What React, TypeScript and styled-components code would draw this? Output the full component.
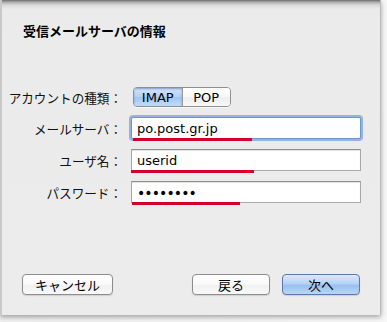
import React from 'react';
import styled, { createGlobalStyle } from 'styled-components';

const GlobalStyle = createGlobalStyle`
  html, body {
    margin: 0;
    padding: 0;
    background: #f4f4f4;
  }
  body {
    font-family: "DejaVu Sans", "Noto Sans CJK JP", sans-serif;
    font-size: 13px;
    color: #111;
  }
`;

const Page = styled.div`
  width: 387px;
  height: 322px;
  overflow: hidden;
  background: linear-gradient(90deg, #f0f0f0 0, #f7f7f7 100%);
`;

const Sheet = styled.div`
  box-sizing: border-box;
  width: 381px;
  height: 315px;
  display: flex;
  flex-direction: column;
  background: linear-gradient(180deg, #6c6c6c 0, #a9a9a9 2px, #d9d9d9 5px, #ebebeb 9px, #ececec 100%);
  border-left: 2px solid #c9c9c9;
  border-right: 1px solid #b9b9b9;
  box-shadow: 0 2px 5px rgba(0, 0, 0, 0.35);
`;

const Title = styled.h1`
  margin: 23px 0 0 21px;
  font-family: "Noto Sans CJK JP", sans-serif;
  font-size: 13px;
  line-height: 16px;
  font-weight: 700;
  color: #000;
`;

const Form = styled.div`
  display: grid;
  grid-template-columns: 120px 230px;
  column-gap: 9px;
  row-gap: 10px;
  align-items: center;
  margin-top: 48px;
`;

const Label = styled.div`
  font-family: "Noto Sans CJK JP", sans-serif;
  font-size: 12.6px;
  text-align: right;
  white-space: nowrap;
  color: #111;
`;

const Segmented = styled.div`
  display: flex;
  width: 98px;
  height: 20px;
  margin-left: 2px;
  box-sizing: border-box;
  border: 1px solid #8f8f8f;
  border-radius: 4px;
  overflow: hidden;
  box-shadow: 0 1px 0 rgba(255, 255, 255, 0.7);
`;

const Segment = styled.div<{ $active?: boolean }>`
  flex: 1;
  display: flex;
  align-items: center;
  justify-content: center;
  font-size: 13px;
  color: #000;
  background: ${({ $active }) =>
    $active
      ? 'linear-gradient(180deg, #d4e5fb 0, #b3d0f5 50%, #9fc4f1 51%, #c3dcfa 100%)'
      : 'linear-gradient(180deg, #ffffff 0, #f7f7f7 50%, #eeeeee 51%, #f8f8f8 100%)'};
  box-shadow: ${({ $active }) => ($active ? 'inset 0 1px 2px rgba(40, 70, 130, 0.45)' : 'none')};
  & + & {
    border-left: 1px solid #9a9a9a;
  }
`;

const FieldWrap = styled.div`
  position: relative;
  width: 230px;
  height: 22px;
`;

const Field = styled.div<{ $focused?: boolean }>`
  box-sizing: border-box;
  height: 22px;
  display: flex;
  align-items: center;
  padding-left: 5px;
  background: #fff;
  border: 1px solid ${({ $focused }) => ($focused ? '#6f97cf' : '#a8a8a8')};
  border-top-color: ${({ $focused }) => ($focused ? '#6f97cf' : '#8e8e8e')};
  border-radius: ${({ $focused }) => ($focused ? '2px' : '0')};
  box-shadow: ${({ $focused }) =>
    $focused ? '0 0 0 2px rgba(120, 160, 220, 0.75)' : 'inset 0 1px 1px rgba(0, 0, 0, 0.12)'};
  font-size: 13px;
  color: #000;
`;

const Dots = styled.span`
  font-family: "DejaVu Sans", sans-serif;
  font-size: 14px;
  letter-spacing: -0.9px;
  padding-top: 1px;
`;

const Underline = styled.div`
  position: absolute;
  left: 2px;
  bottom: -2px;
  height: 3px;
  background: #d6002a;
`;

const Spacer = styled.div`
  flex: 1;
`;

const ButtonRow = styled.div`
  display: flex;
  align-items: center;
  padding: 0 20px 20px 20px;
`;

const Button = styled.button<{ $primary?: boolean; $w: number }>`
  box-sizing: border-box;
  width: ${({ $w }) => $w}px;
  height: 21px;
  padding: 0;
  font-family: "Noto Sans CJK JP", sans-serif;
  font-size: 13px;
  line-height: 19px;
  color: #000;
  border-radius: 4px;
  border: 1px solid ${({ $primary }) => ($primary ? '#5d79a8' : '#8d8d8d')};
  background: ${({ $primary }) =>
    $primary
      ? 'linear-gradient(180deg, #dbe9fc 0, #b6d2f6 45%, #98c0f0 55%, #b9d6f8 100%)'
      : 'linear-gradient(180deg, #ffffff 0, #f9f9f9 50%, #f0f0f0 51%, #f9f9f9 100%)'};
  box-shadow: 0 1px 1px rgba(0, 0, 0, 0.12);
`;

const fields = [
  { label: 'メールサーバ：', value: 'po.post.gr.jp', focused: true, mark: 119, left: 2 },
  { label: 'ユーザ名：', value: 'userid', focused: false, mark: 123, left: 0 },
  { label: 'パスワード：', value: '', secret: 8, focused: false, mark: 108, left: 1 },
];

export default function App() {
  return (
    <Page>
      <GlobalStyle />
      <Sheet>
        <Title>受信メールサーバの情報</Title>
        <Form>
          <Label>アカウントの種類：</Label>
          <Segmented>
            <Segment $active>IMAP</Segment>
            <Segment>POP</Segment>
          </Segmented>
          {fields.map((f) => (
            <React.Fragment key={f.label}>
              <Label>{f.label}</Label>
              <FieldWrap>
                <Field $focused={f.focused}>
                  {f.secret ? <Dots>{'•'.repeat(f.secret)}</Dots> : f.value}
                </Field>
                <Underline style={{ width: f.mark, left: f.left }} />
              </FieldWrap>
            </React.Fragment>
          ))}
        </Form>
        <Spacer />
        <ButtonRow>
          <Button $w={91}>キャンセル</Button>
          <Spacer />
          <Button $w={78}>戻る</Button>
          <Button $w={78} $primary style={{ marginLeft: 12 }}>
            次へ
          </Button>
        </ButtonRow>
      </Sheet>
    </Page>
  );
}
